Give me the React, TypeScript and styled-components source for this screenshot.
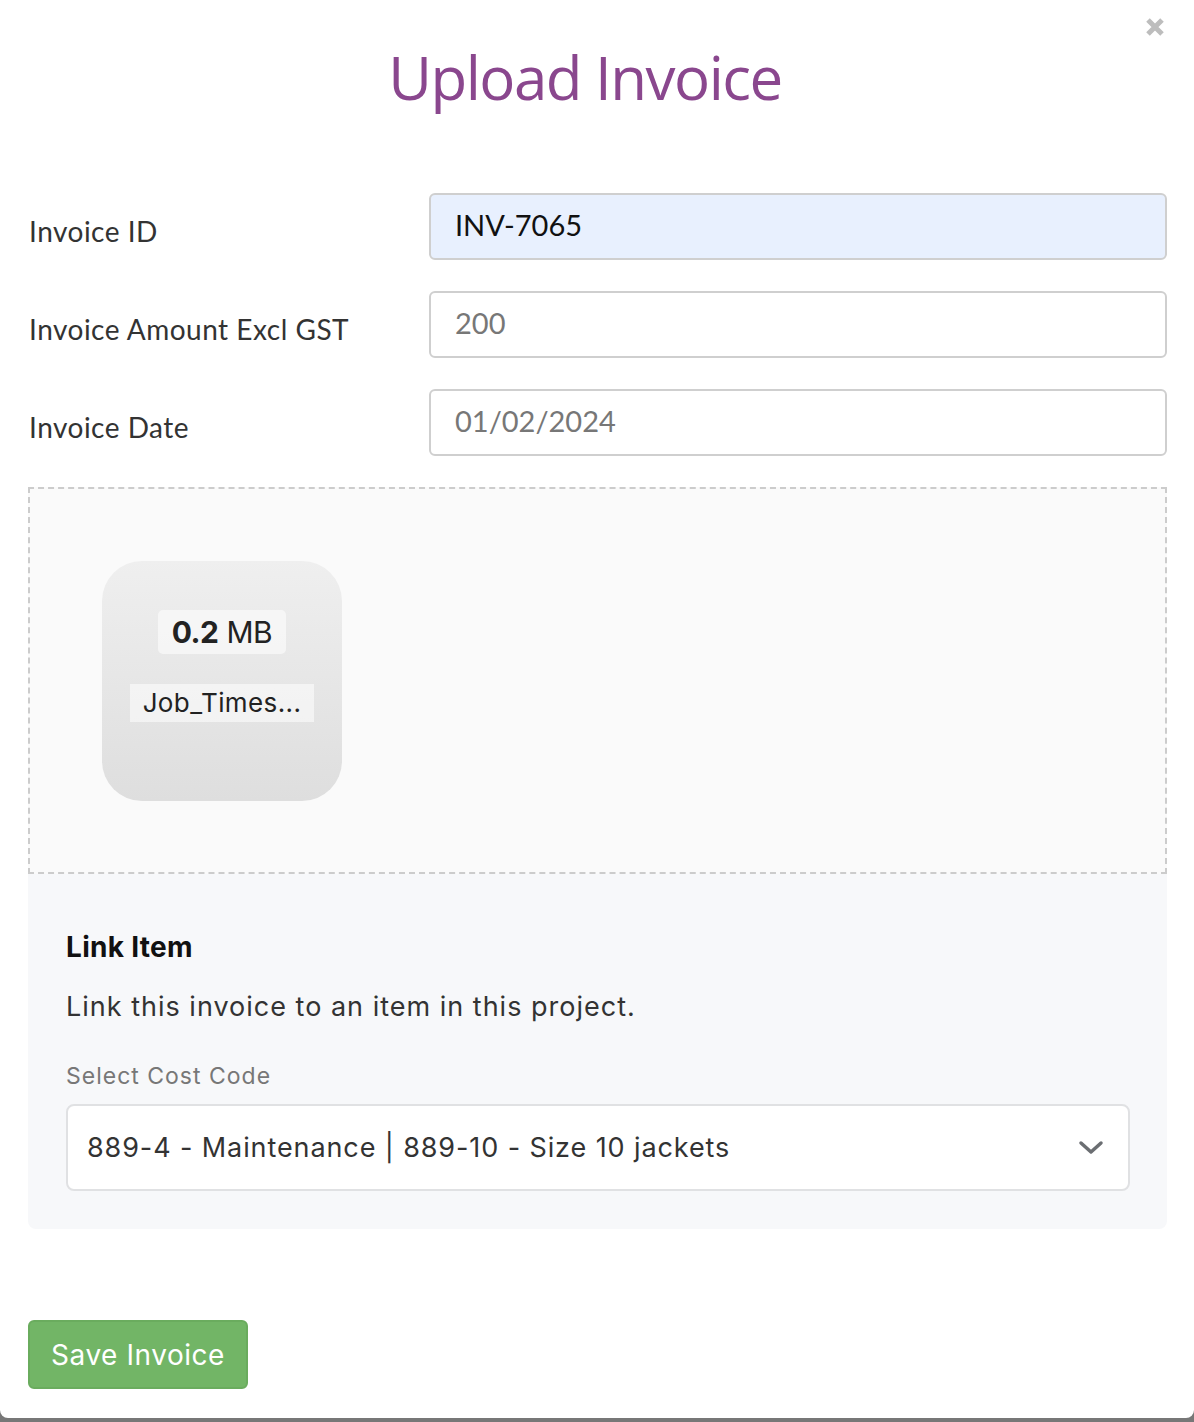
import React from "react";
import styled, { createGlobalStyle } from "styled-components";

const GlobalStyle = createGlobalStyle`
  html, body {
    margin: 0;
    padding: 0;
    background: #777777;
  }
  body {
    font-family: "Inter", "Liberation Sans", sans-serif;
    color: #222;
  }
  * { box-sizing: border-box; }
`;

const Modal = styled.div`
  position: relative;
  width: 1194px;
  height: 1418px;
  background: #ffffff;
  border-radius: 0 0 8px 8px;
  padding: 37px 27px 0 28px;
`;

const CloseButton = styled.button`
  position: absolute;
  top: 14px;
  right: 26px;
  width: 26px;
  height: 26px;
  border: none;
  background: transparent;
  padding: 0;
  cursor: pointer;
  display: flex;
  align-items: center;
  justify-content: center;
`;

const Title = styled.h1`
  margin: 0 0 76px;
  padding-right: 25px;
  text-align: center;
  font-family: "Open Sans", sans-serif;
  font-weight: 500;
  font-size: 60px;
  line-height: 80px;
  letter-spacing: -1.5px;
  color: #8a478e;
`;

const FormRows = styled.div`
  display: flex;
  flex-direction: column;
  gap: 31px;
`;

const Row = styled.div`
  display: grid;
  grid-template-columns: 401px 1fr;
  align-items: center;
`;

const Label = styled.label`
  font-family: "Lato", sans-serif;
  font-size: 28px;
  letter-spacing: 0.5px;
  color: #333;
  padding-top: 8px;
  padding-left: 1px;
`;

const Field = styled.div<{ $filled?: boolean }>`
  height: 67px;
  border: 2px solid #cfcfcf;
  border-radius: 6px;
  background: ${({ $filled }) => ($filled ? "#e8f0fe" : "#ffffff")};
  display: flex;
  align-items: center;
  padding: 0 24px 4px;
  font-family: "Lato", sans-serif;
  font-size: 29px;
  color: ${({ $filled }) => ($filled ? "#111" : "#777")};
`;

const DropZone = styled.div`
  margin-top: 31px;
  height: 387px;
  border: 2px dashed #cccccc;
  background: #fafafa;
  padding: 72px 0 0 72px;
`;

const FileTile = styled.div`
  width: 240px;
  height: 240px;
  border-radius: 40px;
  background: linear-gradient(to bottom, #efefef, #dedede);
  display: flex;
  flex-direction: column;
  align-items: center;
  padding-top: 49px;
  gap: 30px;
`;

const SizeBadge = styled.div`
  background: rgba(255, 255, 255, 0.55);
  border-radius: 5px;
  padding: 3px 14px 3px;
  font-family: "Inter", sans-serif;
  font-size: 30px;
  line-height: 38px;
  color: #222;
  letter-spacing: -0.5px;

  strong {
    font-weight: 700;
    margin-right: 8px;
  }
`;

const NameBadge = styled.div`
  background: rgba(255, 255, 255, 0.55);
  padding: 0 13px;
  font-family: "Inter", sans-serif;
  font-size: 26px;
  letter-spacing: 0.4px;
  line-height: 38px;
  color: #222;
`;

const LinkSection = styled.section`
  background: #f7f8fa;
  border-radius: 0 0 8px 8px;
  padding: 55px 37px 38px 38px;
`;

const SectionTitle = styled.h3`
  margin: 0;
  font-family: "Inter", sans-serif;
  font-weight: 700;
  font-size: 28px;
  line-height: 36px;
  letter-spacing: 0.3px;
  color: #111;
`;

const SectionText = styled.p`
  margin: 24px 0 0;
  font-family: "Inter", sans-serif;
  font-size: 27px;
  letter-spacing: 1px;
  line-height: 36px;
  color: #333;
`;

const SmallLabel = styled.div`
  margin-top: 36px;
  font-family: "Inter", sans-serif;
  font-size: 23px;
  letter-spacing: 1px;
  line-height: 30px;
  color: #777;
`;

const SelectBox = styled.div`
  margin-top: 13px;
  height: 87px;
  background: #ffffff;
  border: 2px solid #e0e1e3;
  border-radius: 8px;
  display: flex;
  align-items: center;
  justify-content: space-between;
  padding: 0 24px 0 19px;
  font-family: "Inter", sans-serif;
  font-size: 27px;
  letter-spacing: 0.9px;
  color: #333;
`;

const Footer = styled.div`
  padding-top: 91px;
`;

const SaveButton = styled.button`
  height: 69px;
  padding: 0 21px;
  background: #72b566;
  border: 2px solid #6aac5e;
  border-radius: 6px;
  color: #ffffff;
  font-family: "Inter", sans-serif;
  font-size: 28px;
  letter-spacing: 0.55px;
  cursor: pointer;
`;

export default function App() {
  return (
    <>
      <GlobalStyle />
      <Modal>
        <CloseButton aria-label="Close">
          <svg width="20" height="20" viewBox="0 0 20 20">
            <path d="M3 3 L17 17 M17 3 L3 17" stroke="#bdbdbd" strokeWidth="5" strokeLinecap="butt" />
          </svg>
        </CloseButton>
        <Title>Upload Invoice</Title>

        <FormRows>
          <Row>
            <Label>Invoice ID</Label>
            <Field $filled>INV-7065</Field>
          </Row>
          <Row>
            <Label>Invoice Amount Excl GST</Label>
            <Field>200</Field>
          </Row>
          <Row>
            <Label>Invoice Date</Label>
            <Field>01/02/2024</Field>
          </Row>
        </FormRows>

        <DropZone>
          <FileTile>
            <SizeBadge>
              <strong>0.2</strong>MB
            </SizeBadge>
            <NameBadge>Job_Times...</NameBadge>
          </FileTile>
        </DropZone>

        <LinkSection>
          <SectionTitle>Link Item</SectionTitle>
          <SectionText>Link this invoice to an item in this project.</SectionText>
          <SmallLabel>Select Cost Code</SmallLabel>
          <SelectBox>
            <span>889-4 - Maintenance | 889-10 - Size 10 jackets</span>
            <svg width="26" height="16" viewBox="0 0 26 16">
              <path d="M3 3 L13 12 L23 3" fill="none" stroke="#6b6e72" strokeWidth="3.5" strokeLinecap="round" strokeLinejoin="round" />
            </svg>
          </SelectBox>
        </LinkSection>

        <Footer>
          <SaveButton>Save Invoice</SaveButton>
        </Footer>
      </Modal>
    </>
  );
}
